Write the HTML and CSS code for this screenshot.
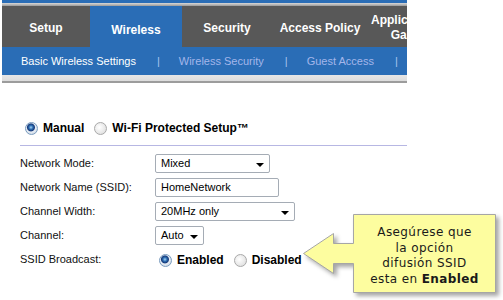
FILE: index.html
```html
<!DOCTYPE html>
<html lang="es">
<head>
    <meta charset="UTF-8">
    <title>Basic Wireless Settings</title>
    <link rel="stylesheet" href="styles.css">
</head>
<body>
    <div class="page">
        <div class="topbar">
            <div class="tabs">
                <div class="tab">Setup</div>
                <div class="tab active">Wireless</div>
                <div class="tab">Security</div>
                <div class="tab">Access Policy</div>
                <div class="tab two">Applications &amp;<br>Gaming</div>
            </div>
        </div>
        <div class="subnav">
            <span class="sub current">Basic Wireless Settings</span>
            <span class="sep">|</span>
            <span class="sub">Wireless Security</span>
            <span class="sep">|</span>
            <span class="sub">Guest Access</span>
            <span class="sep">|</span>
        </div>
        <div class="shelf"></div>

        <div class="content">
            <div class="mode-row">
                <span class="radio on"></span><b>Manual</b>
                <span class="radio"></span><b>Wi-Fi Protected Setup™</b>
            </div>

            <div class="form">
                <div class="label">Network Mode:</div>
                <div class="select w-mode">Mixed<span class="caret"></span></div>

                <div class="label">Network Name (SSID):</div>
                <div class="textbox">HomeNetwork</div>

                <div class="label">Channel Width:</div>
                <div class="select w-width">20MHz only<span class="caret"></span></div>

                <div class="label">Channel:</div>
                <div class="select w-chan">Auto<span class="caret"></span></div>

                <div class="label">SSID Broadcast:</div>
                <div class="radios">
                    <span class="radio on"></span><b>Enabled</b>
                    <span class="radio"></span><b>Disabled</b>
                </div>
            </div>
        </div>
    </div>

    <!-- callout bubble -->
    <div class="callout">
        <svg width="203" height="90" viewBox="0 0 203 90">
            <path d="M53.5,4.5 H195.5 V82.5 H53.5 V53.5 H33.5 V63.5 L3.5,43.5 L33.5,23.5 V33.5 H53.5 Z"
                  fill="#fdfd9f" stroke="#a6a6a6" stroke-width="1"/>
        </svg>
        <div class="callout-text">Asegúrese que<br>la opción<br>difusión SSID<br>esta en <b>Enabled</b></div>
    </div>
</body>
</html>
```

FILE: styles.css
```css
body {
    margin: 0;
    background: #fff;
    font-family: 'Liberation Sans', Arial, sans-serif;
    color: #000;
    overflow: hidden;
}

.page {
    margin-left: 2px;
    width: 405px;
}

.topbar {
    border-top: 3px solid #2a6db6;
    background: linear-gradient(#d8d8d8, #9a9a9a 3px, #585858 3px);
    padding-top: 3px;
    overflow: hidden;
}

.tabs {
    display: flex;
    height: 41px;
}

.tab {
    flex: 0 0 auto;
    display: flex;
    align-items: center;
    justify-content: center;
    text-align: center;
    color: #fff;
    font-weight: bold;
    font-size: 12px;
    background: #585858;
    padding-top: 3px;
    box-sizing: border-box;
}

.tab:nth-child(1) { width: 88px; }
.tab:nth-child(2) { width: 92px; }
.tab:nth-child(3) { width: 90px; }
.tab:nth-child(4) { width: 96px; }
.tab:nth-child(5) { width: 90px; }

.tab.active {
    background: #2a6db6;
    padding-top: 7px;
}

.tab.two {
    line-height: 15px;
    padding-top: 2px;
}

.subnav {
    height: 28px;
    background: #2a6db6;
    display: flex;
    align-items: center;
    font-size: 11px;
    color: #a4b6ea;
}

.sub { margin-left: 19px; }
.sub.current { color: #fff; }

.sep {
    margin-left: 21px;
    color: #a8c4ee;
}

.shelf {
    height: 6px;
    background: linear-gradient(#e6e6e6, #dcdcdc);
    border-bottom: 2px solid #9c9c9c;
}

.content {
    padding: 36px 0 0 18px;
}

.mode-row {
    display: flex;
    align-items: center;
    font-size: 12px;
    height: 18px;
    padding-left: 5px;
    padding-bottom: 8px;
    border-bottom: 1px solid #b7b7e3;
}

.mode-row b { margin-right: 10px; }

.radio {
    display: inline-block;
    width: 13px;
    height: 13px;
    border-radius: 50%;
    border: 1px solid #a9a9a9;
    background: radial-gradient(circle at 40% 40%, #fff, #d8d8d8);
    margin-right: 5px;
    box-sizing: border-box;
    flex: 0 0 auto;
}

.radio.on {
    border-color: #7a9cbf;
    background: radial-gradient(circle at 45% 40%, #a6d6f8 0, #2c6cb0 2px, #173a7a 3.5px, #e8eef5 4.5px, #cfd9e4 7px);
}

.form {
    display: grid;
    grid-template-columns: 135px auto;
    grid-auto-rows: 24px;
    align-items: center;
    font-size: 11px;
    margin-top: 5px;
}

.label { color: #111; }

.select,
.textbox {
    height: 19px;
    box-sizing: border-box;
    border: 1px solid #a5acb5;
    border-radius: 2px;
    background: #fff;
    display: flex;
    align-items: center;
    padding-left: 5px;
    font-size: 11px;
    position: relative;
}

.w-mode { width: 115px; }
.w-width { width: 140px; }
.w-chan { width: 49px; }
.textbox { width: 124px; }

.caret {
    position: absolute;
    right: 5px;
    top: 8px;
    border-left: 4px solid transparent;
    border-right: 4px solid transparent;
    border-top: 4px solid #000;
}

.radios {
    display: flex;
    align-items: center;
    font-size: 12px;
    padding-left: 4px;
    padding-top: 2px;
}

.radios b { margin-right: 10px; }

.callout {
    position: absolute;
    left: 300px;
    top: 210px;
    width: 203px;
    height: 90px;
}

.callout svg {
    display: block;
    filter: drop-shadow(3px 3px 2px rgba(0, 0, 0, 0.35));
}

.callout-text {
    position: absolute;
    left: 54px;
    top: 15px;
    width: 141px;
    text-align: center;
    font-family: 'DejaVu Sans', Verdana, sans-serif;
    font-size: 12px;
    line-height: 15.5px;
    letter-spacing: 0.4px;
    color: #1a1a1a;
}
```
